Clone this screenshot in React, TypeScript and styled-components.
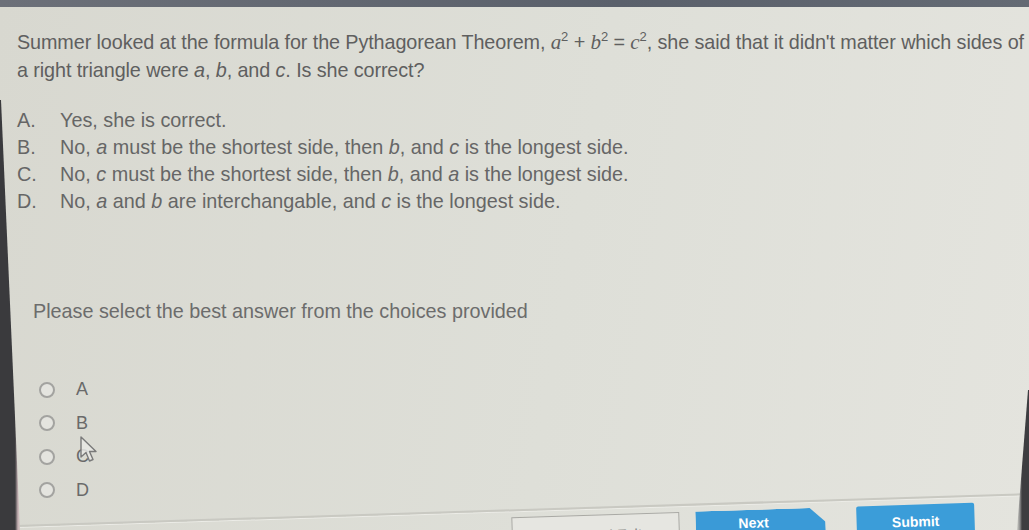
import styled, { createGlobalStyle } from 'styled-components';

const GlobalStyle = createGlobalStyle`
    html, body {
        margin: 0;
        padding: 0;
        overflow: hidden;
    }
    body {
        font-family: "Liberation Sans", Arial, sans-serif;
    }
`

// photo of a monitor: dark bezel creeping in at the lower left and lower right
const Screen = styled.div`
    position: relative;
    width: 1029px;
    height: 530px;
    overflow: hidden;
    display: flex;
    flex-direction: column;
    background: linear-gradient(100deg, #d8d8d0 0%, #dedfd8 55%, #e4e4de 100%);
`

const Bezel = styled.div<{ $side: 'left' | 'right' }>`
    position: absolute;
    top: 0;
    height: 530px;
    z-index: 2;
    pointer-events: none;
    ${({ $side }) => $side === 'left' ? `
        left: 0;
        width: 22px;
        background: linear-gradient(to right, #3a3a3d 0, #3a3a3d 15px, #c8b4b7 18px, #d6d3cc 22px);
        clip-path: polygon(0 100px, 1px 100px, 20px 530px, 0 530px);
    ` : `
        right: 0;
        width: 12px;
        background: linear-gradient(to right, #cfcfc9 0, #8a8a8a 3px, #3d3d40 5px);
        clip-path: polygon(11px 390px, 12px 390px, 12px 530px, 0 530px);
    `}
`

const TopBar = styled.div`
    height: 7px;
    flex-shrink: 0;
    background: linear-gradient(to right, #6c7079, #5a606b 60%, #646a74);
`

const Content = styled.div`
    padding: 21px 0 0 17px;
    color: #626262;
`

const Question = styled.p`
    margin: 0;
    font-size: 19.8px;
    line-height: 28px;
    letter-spacing: -0.1px;
    white-space: nowrap;
    color: #5f5f5f;
`

const Var = styled.i`
    font-family: "Liberation Serif", "Times New Roman", serif;
    font-size: 21px;
`

const Sup = styled.sup`
    font-size: 13px;
    line-height: 0;
    vertical-align: super;
`

const Choices = styled.ol`
    list-style: none;
    margin: 23px 0 0;
    padding: 0;
`

const Choice = styled.li`
    display: flex;
    font-size: 19.8px;
    line-height: 27px;
    color: #666;
`

const ChoiceLetter = styled.span`
    width: 43px;
    flex-shrink: 0;
`

const Prompt = styled.p`
    margin: 84px 0 0 16px;
    font-size: 19.8px;
    line-height: 24px;
    color: #6c6c6c;
`

const RadioGroup = styled.div`
    margin: 50px 0 0 22px;
    display: flex;
    flex-direction: column;
`

const RadioRow = styled.label`
    display: flex;
    align-items: center;
    gap: 21px;
    height: 33.5px;
    font-size: 18px;
    color: #6a6a6a;
`

const RadioCircle = styled.span`
    width: 12px;
    height: 12px;
    border: 2px solid #a3a3a0;
    border-radius: 50%;
    background: #e4e4df;
`

const Cursor = styled.svg`
    position: absolute;
    left: 79px;
    top: 436px;
    width: 20px;
    height: 28px;
`

const Footer = styled.div`
    margin-top: auto;
    height: 28px;
    flex-shrink: 0;
    border-top: 2px solid #c9c9c2;
    box-shadow: inset 0 1px 0 #ecece7;
    display: flex;
    align-items: flex-start;
    padding: 6px 0 0 526px;
    gap: 16px;
    transform: rotate(-1.8deg);
    transform-origin: 600px 0;
    width: 1060px;
    margin-left: -15px;
`

const FooterButton = styled.button<{ $kind?: 'plain' | 'primary' | 'next' }>`
    height: 32px;
    border: none;
    font-family: "Liberation Sans", Arial, sans-serif;
    font-size: 14px;
    font-weight: bold;
    color: #fff;
    padding: 0;
    display: flex;
    justify-content: center;
    ${({ $kind }) => $kind === 'plain' && `
        width: 168px;
        background: #e6e6e1;
        border: 1px solid #a9a9a4;
        color: #777;
        font-weight: normal;
        font-size: 15px;
        padding-top: 11px;
    `}
    ${({ $kind }) => $kind === 'next' && `
        width: 130px;
        background: #3a9ad7;
        clip-path: polygon(0 0, 88% 0, 100% 45%, 100% 100%, 0 100%);
        padding-right: 14px;
        padding-top: 5px;
    `}
    ${({ $kind }) => $kind === 'primary' && `
        width: 118px;
        background: #3b9dd9;
        border-radius: 2px;
        margin-left: 15px;
        padding-top: 9px;
    `}
`

export default function App() {
    return (
        <>
            <GlobalStyle />
            <Screen>
                <TopBar />
                <Content>
                    <Question>
                        Summer looked at the formula for the Pythagorean Theorem, <Var>a</Var><Sup>2</Sup> + <Var>b</Var><Sup>2</Sup> = <Var>c</Var><Sup>2</Sup>, she said that it didn't matter which sides of<br />
                        a right triangle were <i>a</i>, <i>b</i>, and <i>c</i>. Is she correct?
                    </Question>
                    <Choices>
                        <Choice>
                            <ChoiceLetter>A.</ChoiceLetter>
                            <span>Yes, she is correct.</span>
                        </Choice>
                        <Choice>
                            <ChoiceLetter>B.</ChoiceLetter>
                            <span>No, <i>a</i> must be the shortest side, then <i>b</i>, and <i>c</i> is the longest side.</span>
                        </Choice>
                        <Choice>
                            <ChoiceLetter>C.</ChoiceLetter>
                            <span>No, <i>c</i> must be the shortest side, then <i>b</i>, and <i>a</i> is the longest side.</span>
                        </Choice>
                        <Choice>
                            <ChoiceLetter>D.</ChoiceLetter>
                            <span>No, <i>a</i> and <i>b</i> are interchangable, and <i>c</i> is the longest side.</span>
                        </Choice>
                    </Choices>
                    <Prompt>Please select the best answer from the choices provided</Prompt>
                    <RadioGroup>
                        {['A', 'B', 'C', 'D'].map((l) => (
                            <RadioRow key={l}>
                                <RadioCircle />
                                <span>{l}</span>
                            </RadioRow>
                        ))}
                    </RadioGroup>
                </Content>
                <Footer>
                    <FooterButton $kind="plain">Save and Exit</FooterButton>
                    <FooterButton $kind="next">Next</FooterButton>
                    <FooterButton $kind="primary">Submit</FooterButton>
                </Footer>
                <Cursor viewBox="0 0 20 28">
                    <path d="M2 1 L2 21 L7 16.5 L10.5 25 L14 23.5 L10.5 15.5 L17 15.5 Z" fill="rgba(232,232,228,0.85)" stroke="#7a7a7a" strokeWidth="1.4" strokeLinejoin="round" />
                </Cursor>
                <Bezel $side="left" />
                <Bezel $side="right" />
            </Screen>
        </>
    );
}
